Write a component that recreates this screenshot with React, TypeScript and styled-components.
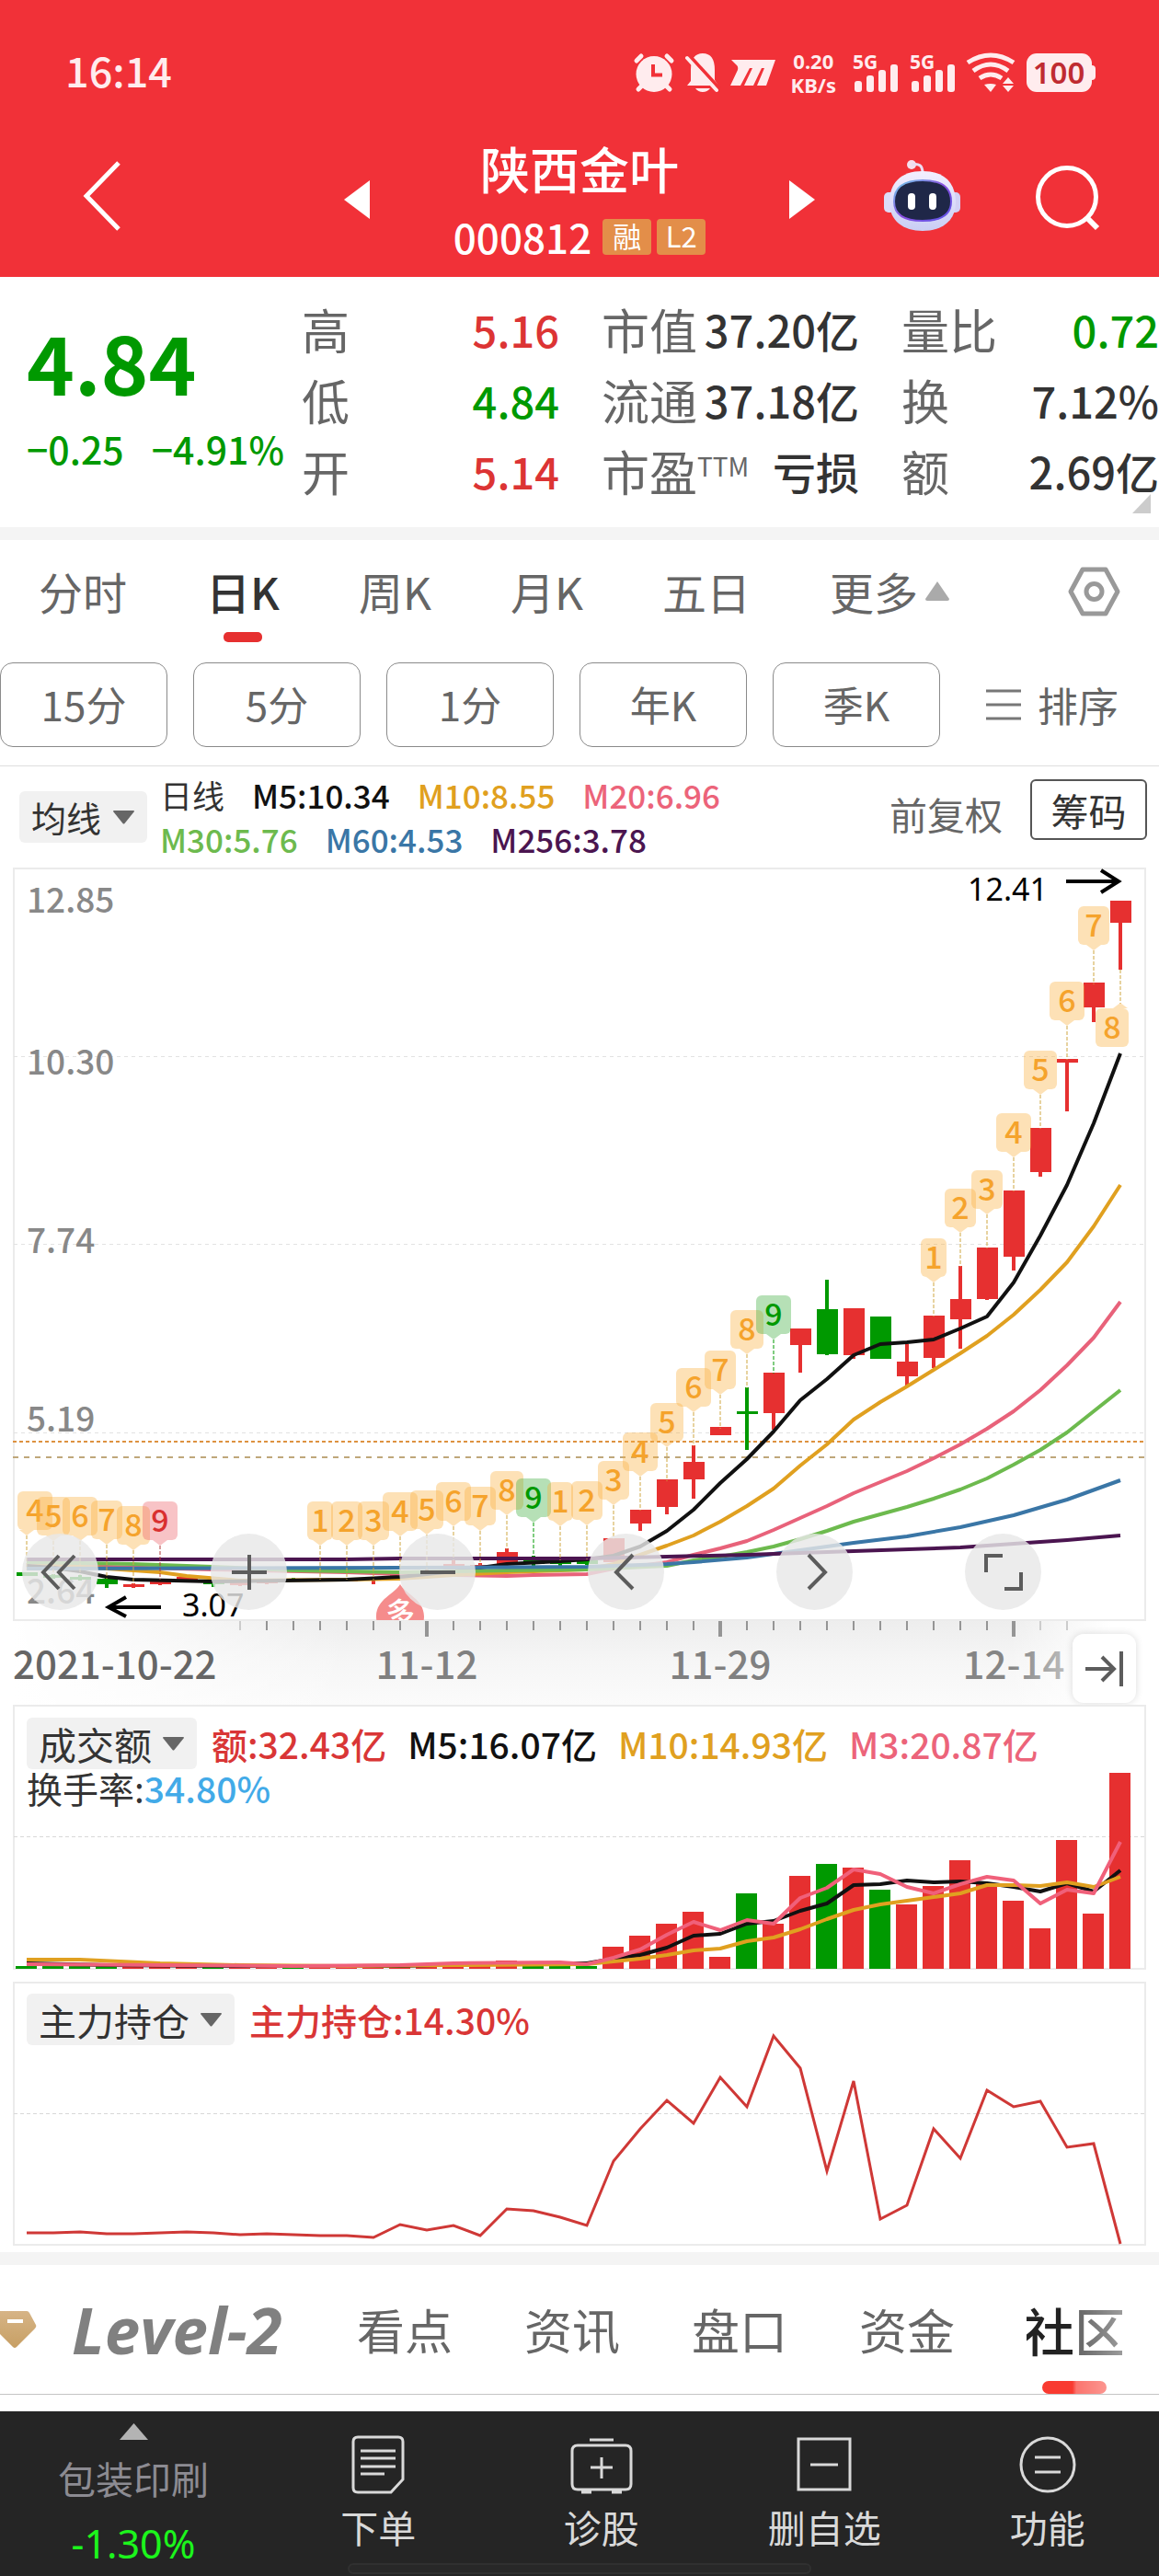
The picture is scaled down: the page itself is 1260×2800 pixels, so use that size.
import React from "react";
import styled, { createGlobalStyle } from "styled-components";

const SANS = `"Noto Sans CJK SC", "Noto Sans", sans-serif`;
const RED = "#e63030";
const GREEN = "#009900";

const GlobalStyle = createGlobalStyle`
  * { box-sizing: border-box; }
  body { margin: 0; background: #fff; font-family: ${SANS}; color: #333; }
  button, select { font: inherit; color: inherit; border: 0; margin: 0; padding: 0; background: none; cursor: pointer; }
  svg { display: block; flex: none; overflow: visible; }
  dl, dt, dd, h1, p { margin: 0; font-weight: inherit; }
`;

/* ---------- header ---------- */

const Header = styled.header`
  background: #f13138;
  color: #fff;
`;

const StatusBar = styled.div`
  display: flex;
  align-items: center;
  justify-content: space-between;
  height: 129px;
  padding: 28px 69px 0 71px;
`;

const Clock = styled.time`
  padding-bottom: 6px;
  font-size: 45px;
  line-height: 48px;
  font-weight: 500;
  color: #ffecee;
`;

const StatusIcons = styled.div`
  display: flex;
  align-items: center;
  gap: 12px;
  color: #ffecee;
`;

const NetSpeed = styled.div`
  font-family: "Noto Sans", sans-serif;
  font-size: 22px;
  line-height: 26px;
  font-weight: 700;
  text-align: center;
  margin: 0 6px 0 4px;
`;

const TitleBar = styled.div`
  display: grid;
  grid-template-columns: 1fr 512px 1fr;
  align-items: center;
  height: 172px;
  padding: 0 64px 0 90px;
`;

const TitleCenter = styled.div`
  display: flex;
  align-items: center;
  justify-content: space-between;
  margin: 0 -13px 0 -13px;
  padding: 4px 26px 0 0;
`;

const TitleActions = styled.div`
  display: flex;
  align-items: center;
  justify-content: flex-end;
  gap: 80px;
`;

const StockName = styled.h1`
  font-size: 54px;
  line-height: 60px;
  font-weight: 500;
  text-align: center;
`;

const StockCode = styled.div`
  display: flex;
  align-items: center;
  gap: 12px;
  margin-top: 20px;
  font-size: 44px;
  line-height: 48px;
  font-weight: 500;
`;

const Badges = styled.span`
  display: flex;
  gap: 6px;
`;

const Badge = styled.span`
  width: 53px;
  height: 39px;
  border-radius: 4px;
  background: #e38e49;
  font-size: 31px;
  line-height: 36px;
  font-weight: 400;
  text-align: center;
`;

/* ---------- quote ---------- */

const Quote = styled.section`
  position: relative;
  display: grid;
  grid-template-columns: 282px repeat(3, 1fr);
  column-gap: 46px;
  padding: 18px 0 23px;
`;

const PriceBlock = styled.div`
  padding: 28px 0 0 29px;
  color: ${GREEN};
  white-space: nowrap;
`;

const Price = styled.div`
  font-size: 88px;
  line-height: 90px;
  font-weight: 700;
`;

const Change = styled.div`
  display: flex;
  gap: 30px;
  margin-top: 26px;
  font-size: 41px;
  line-height: 48px;
  font-weight: 500;
`;

const Stats = styled.dl``;

const Stat = styled.div`
  display: flex;
  justify-content: space-between;
  line-height: 77px;
  white-space: nowrap;
`;

const StatLabel = styled.dt`
  font-size: 52px;
  color: #666;
`;

const Ttm = styled.sup`
  font-size: 28px;
  line-height: 28px;
  vertical-align: 16px;
`;

const StatValue = styled.dd<{ $color?: string }>`
  font-size: 47px;
  font-weight: 500;
  color: ${(p) => p.$color ?? "#333"};
`;

const Corner = styled.svg`
  position: absolute;
  right: 9px;
  bottom: 15px;
`;

const Band = styled.div`
  height: 14px;
  background: #f4f4f4;
`;

/* ---------- period tabs ---------- */

const Periods = styled.nav`
  display: flex;
  align-items: flex-start;
  gap: 86px;
  height: 133px;
  padding: 25px 42px 0;
`;

const Period = styled.button<{ $active?: boolean }>`
  display: flex;
  flex-direction: column;
  align-items: center;
  gap: 15px;
  font-size: 48px;
  line-height: 60px;
  white-space: nowrap;
  font-weight: ${(p) => (p.$active ? 500 : 400)};
  color: ${(p) => (p.$active ? "#333" : "#666")};

  &::after {
    content: "";
    width: 42px;
    height: 11px;
    border-radius: 5px;
    background: ${(p) => (p.$active ? RED : "transparent")};
  }
`;

const WithIcon = styled.span`
  display: flex;
  align-items: center;
  gap: 8px;
`;

const GearButton = styled.button`
  margin: 4px 0 0 auto;
`;

const Pills = styled.div`
  display: flex;
  gap: 28px;
  padding-bottom: 20px;
  border-bottom: 1px solid #dedede;
`;

const Pill = styled.button`
  flex: 1;
  height: 92px;
  padding-bottom: 2px;
  border: 1px solid #8a8a8a;
  border-radius: 14px;
  font-size: 44px;
  color: #666;
`;

const SortButton = styled.button`
  display: flex;
  align-items: center;
  gap: 18px;
  width: 210px;
  padding-left: 22px;
  font-size: 44px;
  color: #666;
  white-space: nowrap;
`;

/* ---------- indicator legends ---------- */

const MaBar = styled.div`
  display: flex;
  align-items: center;
  height: 110px;
  padding: 0 13px 0 21px;
`;

const Drop = styled.label`
  display: flex;
  align-items: center;
  height: 56px;
  padding: 0 14px 0 13px;
  gap: 12px;
  border-radius: 6px;
  background: #f1f1f1;
`;

const DropSelect = styled.select<{ $size: number }>`
  appearance: none;
  outline: 0;
  font-size: ${(p) => p.$size}px;
  line-height: 54px;
  color: #333;
`;

const MaLegend = styled.div`
  display: grid;
  margin-left: 14px;
`;

const LegendRow = styled.div<{ $gap: number; $size: number; $line?: number }>`
  display: flex;
  gap: ${(p) => p.$gap}px;
  font-size: ${(p) => p.$size}px;
  line-height: ${(p) => p.$line ?? 48}px;
  font-weight: 500;
  white-space: nowrap;
`;

const Ink = styled.span<{ $color: string; $weight?: number }>`
  color: ${(p) => p.$color};
  font-weight: ${(p) => p.$weight ?? 500};
`;

const AdjustButton = styled.button`
  margin: 0 0 8px auto;
  font-size: 41px;
  color: #666;
`;

const ChipButton = styled.button`
  width: 127px;
  height: 66px;
  margin: 0 0 16px 30px;
  border: 2px solid #555;
  border-radius: 6px;
  font-size: 41px;
  line-height: 56px;
`;

/* ---------- charts ---------- */

const ChartPanel = styled.section<{ $gap: number }>`
  position: relative;
  padding: 0 14px;
  margin-bottom: ${(p) => p.$gap}px;
`;

const Plot = styled.svg`
  width: 100%;
  height: auto;
  font-family: ${SANS};
`;

const PanelHead = styled.div`
  position: absolute;
  top: 14px;
  left: 29px;
  right: 29px;
`;

const PanelRow = styled.div`
  display: flex;
  align-items: center;
  gap: 16px;
`;

const ChartControls = styled.div`
  position: absolute;
  left: 24px;
  right: 128px;
  bottom: 103px;
  display: flex;
  justify-content: space-between;
`;

const RoundButton = styled.button`
  display: grid;
  place-items: center;
  width: 83px;
  height: 83px;
  border-radius: 50%;
  background: rgba(232, 232, 232, 0.82);
`;

const JumpButton = styled.button`
  position: absolute;
  right: 25px;
  bottom: 2px;
  display: grid;
  place-items: center;
  width: 69px;
  height: 75px;
  border-radius: 12px;
  background: #fff;
  box-shadow: 0 0 8px rgba(0, 0, 0, 0.14);
`;

/* ---------- info tabs and bottom bar ---------- */

const InfoTabs = styled.nav`
  display: flex;
  align-items: center;
  gap: 78px;
  height: 141px;
  border-bottom: 1px solid #c4c4c4;
  overflow: hidden;
`;

const LevelTab = styled.button`
  display: flex;
  align-items: center;
  gap: 38px;
  width: 310px;
  font-family: "Open Sans", sans-serif;
  font-size: 69px;
  line-height: 60px;
  font-weight: 700;
  font-style: italic;
  color: #808080;
  white-space: nowrap;
`;

const InfoTab = styled.button<{ $active?: boolean }>`
  display: flex;
  flex-direction: column;
  align-items: center;
  justify-content: flex-end;
  width: 104px;
  height: 140px;
  font-size: ${(p) => (p.$active ? 56 : 52)}px;
  font-weight: ${(p) => (p.$active ? 500 : 400)};
  line-height: 72px;
  white-space: nowrap;
  color: ${(p) => (p.$active ? "#222" : "#666")};
  mask-image: ${(p) => (p.$active ? "linear-gradient(to right, #000 48%, rgba(0,0,0,.7) 52%, rgba(0,0,0,.45) 100%)" : "none")};
  mask-clip: no-clip;

  &::after {
    content: "";
    width: 70px;
    height: 14px;
    margin-top: 20px;
    border-radius: 7px;
    background: ${(p) => (p.$active ? "#f93a30" : "transparent")};
  }
`;

const BottomBar = styled.footer`
  display: grid;
  grid-template-columns: 290px repeat(4, 1fr);
  position: relative;
  height: 179px;
  margin-top: 18px;
  background: #252525;
  color: #d9d9d9;
`;

const Sector = styled.button`
  display: flex;
  flex-direction: column;
  align-items: center;
  padding-top: 13px;
  font-size: 41px;
  line-height: 50px;
  color: #8c8b92;
`;

const SectorName = styled.span`
  margin-top: 16px;
`;

const SectorChange = styled.span`
  margin-top: 22px;
  font-family: "Noto Sans", sans-serif;
  font-size: 43px;
  color: #1cf51c;
`;

const Action = styled.button`
  display: flex;
  flex-direction: column;
  align-items: center;
  padding-top: 26px;
  gap: 10px;
  font-size: 41px;
  line-height: 50px;
`;

const HomeIndicator = styled.div`
  position: absolute;
  left: 30%;
  right: 30%;
  bottom: 2px;
  height: 12px;
  border-radius: 6px;
  border: 2px solid #303030;
  background: #282828;
`;

/* ---------- chart data ---------- */

const x = (i: number) => 29 + 29 * i;

const known = (pairs: number[][]) => pairs.map(([i, y]) => `${x(i)},${y}`).join(" ");
const dense = (ys: number[]) => ys.map((y, i) => `${x(i)},${y}`).join(" ");

// [index, up, high, bodyTop, bodyBottom, low]
const candles: [number, boolean, number, number, number, number][] = [
  [0, false, 1709, 1709, 1713, 1713], [1, false, 1711, 1712, 1715, 1716], [2, false, 1712, 1714, 1717, 1718],
  [3, false, 1715, 1716, 1722, 1726], [4, true, 1721, 1722, 1725, 1726], [5, true, 1718, 1719, 1722, 1723],
  [6, true, 1714, 1714, 1718, 1718], [7, false, 1716, 1717, 1722, 1725], [8, true, 1719, 1720, 1723, 1724],
  [9, true, 1718, 1719, 1721, 1722], [10, false, 1715, 1716, 1719, 1719], [11, true, 1716, 1717, 1719, 1719],
  [12, true, 1716, 1717, 1719, 1719], [13, true, 1714, 1716, 1718, 1722], [14, true, 1711, 1712, 1716, 1716],
  [15, true, 1706, 1708, 1712, 1712], [16, true, 1695, 1700, 1706, 1706], [17, true, 1699, 1701, 1704, 1704],
  [18, true, 1683, 1687, 1701, 1701], [19, false, 1691, 1696, 1700, 1702], [20, false, 1695, 1698, 1700, 1702],
  [21, false, 1692, 1696, 1700, 1701], [22, true, 1672, 1672, 1698, 1698], [23, true, 1641, 1641, 1656, 1664],
  [24, true, 1608, 1608, 1638, 1646], [25, true, 1571, 1589, 1608, 1629], [26, true, 1551, 1551, 1560, 1560],
  [27, false, 1508, 1534, 1537, 1576], [28, true, 1492, 1492, 1536, 1554], [29, true, 1444, 1444, 1462, 1492],
  [30, false, 1391, 1423, 1472, 1473], [31, true, 1422, 1422, 1473, 1477], [32, false, 1431, 1431, 1477, 1477],
  [33, true, 1461, 1480, 1496, 1506], [34, true, 1430, 1430, 1476, 1487], [35, true, 1376, 1412, 1434, 1466],
  [36, true, 1356, 1356, 1412, 1413], [37, true, 1294, 1294, 1366, 1381], [38, true, 1226, 1226, 1274, 1279],
  [39, true, 1151, 1151, 1155, 1208], [40, true, 1068, 1068, 1095, 1111], [41, true, 979, 979, 1003, 1054],
];

// [index, digit, tip y]
const flags: [number, number, number][] = [
  [0, 4, 1669], [1, 5, 1675], [2, 6, 1675], [3, 7, 1679], [4, 8, 1685], [5, 9, 1680],
  [11, 1, 1680], [12, 2, 1680], [13, 3, 1680], [14, 4, 1670], [15, 5, 1668], [16, 6, 1659], [17, 7, 1664],
  [18, 8, 1647], [19, 9, 1655], [20, 1, 1659], [21, 2, 1658], [22, 3, 1636], [23, 4, 1605], [24, 5, 1573],
  [25, 6, 1535], [26, 7, 1516], [27, 8, 1472], [28, 9, 1456], [34, 1, 1394], [35, 2, 1340], [36, 3, 1320],
  [37, 4, 1258], [38, 5, 1190], [39, 6, 1115], [40, 7, 1033],
];
const flagWidth = [0, 28, 34, 34, 38, 36, 38, 34, 36, 38];

const averages: [string, string][] = [
  ["#e8627a", known([[0, 1702], [3, 1703], [7, 1706], [12, 1709], [14, 1711], [18, 1713], [19, 1712], [21, 1711], [22, 1705], [23, 1702], [24, 1698], [25, 1690], [26, 1683], [27, 1675], [28, 1663], [29, 1650], [30, 1637], [31, 1623], [32, 1611], [33, 1599], [34, 1585], [35, 1570], [36, 1553], [37, 1534], [38, 1511], [39, 1484], [40, 1454], [41, 1415]])],
  ["#e0a020", known([[0, 1698], [3, 1705], [5, 1709], [6, 1713], [8, 1718], [12, 1717], [14, 1716], [16, 1712], [18, 1709], [20, 1707], [21, 1706], [22, 1700], [23, 1690], [24, 1680], [25, 1669], [26, 1654], [27, 1637], [28, 1618], [29, 1593], [30, 1570], [31, 1543], [32, 1524], [33, 1507], [34, 1489], [35, 1471], [36, 1452], [37, 1429], [38, 1402], [39, 1372], [40, 1333], [41, 1288]])],
  ["#111", known([[0, 1702], [1, 1704], [2, 1708], [3, 1714], [4, 1717], [7, 1719], [12, 1717], [14, 1714], [16, 1708], [18, 1700], [20, 1697], [21, 1695], [22, 1691], [23, 1681], [24, 1664], [25, 1641], [26, 1612], [27, 1586], [28, 1556], [29, 1522], [30, 1499], [31, 1473], [32, 1461], [33, 1459], [34, 1456], [35, 1444], [36, 1431], [37, 1394], [38, 1343], [39, 1288], [40, 1221], [41, 1145]])],
  ["#6dba4e", known([[0, 1698], [4, 1700], [7, 1703], [10, 1707], [14, 1709], [18, 1707], [21, 1706], [24, 1702], [25, 1696], [26, 1692], [27, 1687], [28, 1681], [29, 1673], [30, 1664], [31, 1654], [32, 1646], [33, 1638], [34, 1629], [35, 1619], [36, 1607], [37, 1592], [38, 1576], [39, 1557], [40, 1534], [41, 1511]])],
  ["#3a76a6", known([[0, 1705], [14, 1704], [21, 1703], [24, 1700], [25, 1698], [27, 1693], [29, 1685], [31, 1677], [33, 1670], [35, 1660], [37, 1647], [39, 1630], [41, 1609]])],
  ["#4b1550", known([[0, 1695], [12, 1695], [14, 1694], [21, 1694], [24, 1692], [27, 1690], [31, 1686], [35, 1682], [37, 1678], [39, 1674], [41, 1669]])],
];

const volumeTops = [2137, 2137, 2137, 2137, 2137, 2137, 2137, 2137, 2137, 2137, 2137, 2137, 2137, 2137, 2137, 2136, 2135, 2135, 2131, 2136, 2136, 2137, 2116, 2104, 2091, 2078, 2127, 2058, 2091, 2039, 2026, 2030, 2054, 2070, 2050, 2022, 2047, 2066, 2096, 2000, 2080, 1927];
const volumeDown = new Set([0, 1, 2, 3, 7, 10, 19, 20, 21, 27, 30, 32]);

const volumeAverages: [string, string][] = [
  ["#111", known([[0, 2134], [3, 2136], [8, 2137], [14, 2137], [18, 2134], [21, 2134], [22, 2129], [23, 2125], [24, 2117], [25, 2104], [26, 2102], [27, 2091], [28, 2088], [29, 2077], [30, 2069], [31, 2049], [32, 2048], [33, 2044], [34, 2046], [35, 2045], [36, 2047], [37, 2051], [38, 2056], [39, 2047], [40, 2056], [41, 2033]])],
  ["#e0a020", known([[0, 2130], [2, 2130], [5, 2134], [8, 2136], [12, 2137], [16, 2136], [21, 2135], [22, 2132], [23, 2129], [24, 2125], [25, 2120], [26, 2118], [27, 2110], [28, 2106], [29, 2097], [30, 2086], [31, 2076], [32, 2070], [33, 2066], [34, 2062], [35, 2058], [36, 2049], [37, 2049], [38, 2050], [39, 2046], [40, 2051], [41, 2040]])],
  ["#f0607a", known([[0, 2135], [10, 2137], [14, 2136], [16, 2134], [20, 2133], [21, 2135], [22, 2128], [23, 2119], [24, 2103], [25, 2089], [26, 2098], [27, 2087], [28, 2091], [29, 2063], [30, 2052], [31, 2032], [32, 2037], [33, 2051], [34, 2058], [35, 2048], [36, 2040], [37, 2044], [38, 2069], [39, 2054], [40, 2058], [41, 2002]])],
];

const holding = dense([2427, 2427, 2426, 2428, 2428, 2427, 2426, 2427, 2429, 2428, 2429, 2430, 2430, 2432, 2418, 2424, 2419, 2430, 2401, 2403, 2410, 2419, 2349, 2314, 2283, 2308, 2258, 2290, 2213, 2248, 2360, 2262, 2412, 2397, 2314, 2346, 2272, 2290, 2284, 2334, 2330, 2439]);

/* ---------- drawings ---------- */

const Caret = () => (
  <svg width="23" height="15" viewBox="0 0 23 15"><path d="M0 1Q0 0 1 0H22Q23 0 23 1L12.500 14Q11.500 15 10.500 14Z" fill="#666" /></svg>
);

const Signal = () => (
  <svg width="50" height="42" viewBox="0 0 50 42">
    <text x="0" y="17" fontFamily="Noto Sans" fontSize="21" fontWeight="700" fill="currentColor">5G</text>
    {[0, 1, 2, 3].map((n) => (
      <rect key={n} x={2 + n * 13} y={30 - n * 6} width="8" height={12 + n * 6} rx="3" fill="currentColor" />
    ))}
  </svg>
);

const AlarmIcon = () => (
  <svg width="44" height="42" viewBox="0 0 44 42">
    <g stroke="currentColor" strokeWidth="5" strokeLinecap="round">
      <path d="M3 8L8 3M36 3L41 8M10 34L5 39M34 34L39 39" />
    </g>
    <circle cx="22" cy="22.500" r="19.500" fill="currentColor" />
    <path d="M21 12V23.500H31" fill="none" stroke="#f13138" strokeWidth="4" />
  </svg>
);

const MuteIcon = () => (
  <svg width="37" height="42" viewBox="0 0 37 42">
    <path d="M2 35L6 30V18Q6 0 19 0Q32 0 32 18V29L36 35ZM11 38H27Q24 42 19 42Q14 42 11 38Z" fill="currentColor" />
    <path d="M4 2L37 38" stroke="#f13138" strokeWidth="4" />
    <path d="M2 5L34 40" stroke="currentColor" strokeWidth="4" strokeLinecap="round" />
  </svg>
);

const BrandIcon = () => (
  <svg width="50" height="28" viewBox="0 0 50 28">
    <path d="M1 0H49L39 28H29L37 9H34L25 28H15L24 9H21L11 28H0L8 11Q9 7 6 5Z" fill="currentColor" />
  </svg>
);

const WifiIcon = () => (
  <svg width="53" height="42" viewBox="0 0 53 42">
    <g fill="none" stroke="currentColor" strokeWidth="5">
      <path d="M1 10Q26 -6 51 10M7 19Q26 5 45 19M14 27Q26 19 38 27" />
    </g>
    <path d="M19 34Q26 32 32 34L26 42ZM39 33L45 26L51 33ZM39 35H51L45 42Z" fill="currentColor" />
  </svg>
);

const BatteryIcon = () => (
  <svg width="75" height="42" viewBox="0 0 75 42">
    <rect width="71" height="42" rx="11" fill="currentColor" />
    <path d="M71 13Q75 13 75 17V25Q75 29 71 29Z" fill="currentColor" />
    <text x="35" y="33" textAnchor="middle" fontFamily="Noto Sans" fontSize="33" fontWeight="600" fill="#bf2b31">100</text>
  </svg>
);

const RobotIcon = () => (
  <svg width="86" height="82" viewBox="0 0 86 82">
    <defs>
      <linearGradient id="shell" x1="0" y1="0" x2="0" y2="1">
        <stop offset="0" stopColor="#f3efff" /><stop offset="1" stopColor="#c9cdf4" />
      </linearGradient>
      <linearGradient id="rim" x1="0" y1="0" x2="1" y2="1">
        <stop offset="0" stopColor="#6fd0ea" /><stop offset="0.500" stopColor="#8a4ee0" /><stop offset="1" stopColor="#5a55e6" />
      </linearGradient>
    </defs>
    <circle cx="31" cy="5" r="5" fill="#f5dfee" />
    <path d="M31 5Q43 2 43 14" fill="none" stroke="#ecdcf2" strokeWidth="3" />
    <rect x="1" y="35" width="12" height="22" rx="5" fill="#dcdcf8" />
    <rect x="72" y="35" width="12" height="22" rx="5" fill="#d3d0f5" />
    <path d="M43 12C67 12 79 25 79 46C79 66 64 77 43 77C22 77 7 66 7 46C7 25 19 12 43 12Z" fill="url(#shell)" />
    <path d="M43 22C64 22 74 30 74 45C74 59 64 66 43 66C22 66 12 59 12 45C12 30 22 22 43 22Z" fill="#1f2748" stroke="url(#rim)" strokeWidth="2" />
    <rect x="27" y="36" width="8" height="18" rx="4" fill="#fff" />
    <rect x="50" y="36" width="8" height="18" rx="4" fill="#fff" />
  </svg>
);

const Flag = ({ i, digit, tip }: { i: number; digit: number; tip: number }) => {
  const w = flagWidth[digit];
  const early = i === 5;
  const fill = digit === 9 ? (early ? "#ec6268" : "#3fae3f") : "#fbb040";
  const ink = digit === 9 ? (early ? "#d93030" : GREEN) : "#f5a32c";
  const cx = i === 0 ? 38 : x(i);
  return (
    <g>
      <path d={`M${x(i)} ${tip}V${tip + 37}`} stroke={digit === 9 ? (early ? "#b03a3a" : GREEN) : "#cfa640"} strokeWidth="1" strokeDasharray="4 2" />
      <rect x={cx - w / 2} y={tip - 48} width={w} height="42" rx="6" fill={fill} fillOpacity="0.380" />
      <path d={`M${x(i) - 8} ${tip - 6}H${x(i) + 8}L${x(i)} ${tip}Z`} fill={fill} fillOpacity="0.380" />
      <text x={cx} y={tip - 15} textAnchor="middle" fontSize="34" fontWeight="500" fill={ink}>{digit}</text>
    </g>
  );
};

const PriceChart = () => (
  <Plot viewBox="14 943 1232 910" role="img" aria-label="日K">
    <defs>
      <linearGradient id="axisShade" x1="0" y1="0" x2="0" y2="1">
        <stop offset="0" stopColor="#ededed" /><stop offset="0.500" stopColor="#f6f6f6" /><stop offset="1" stopColor="#fbfbfb" />
      </linearGradient>
      <linearGradient id="axisFade" x1="0" y1="0" x2="1" y2="0">
        <stop offset="0" stopColor="#fff" /><stop offset="0.300" stopColor="#fff" stopOpacity="0" />
        <stop offset="0.880" stopColor="#fff" stopOpacity="0" /><stop offset="0.970" stopColor="#fff" />
      </linearGradient>
      <linearGradient id="dateFade" gradientUnits="userSpaceOnUse" x1="1100" y1="0" x2="1175" y2="0">
        <stop offset="0" stopColor="#858585" /><stop offset="1" stopColor="#ccc" />
      </linearGradient>
      <clipPath id="plotClip"><rect x="15" y="945" width="1230" height="816" /></clipPath>
    </defs>
    <rect x="15" y="1761" width="1230" height="92" fill="url(#axisShade)" />
    <rect x="15" y="1761" width="1230" height="92" fill="url(#axisFade)" />
    <rect x="15" y="944" width="1230" height="817" fill="#fff" stroke="#ebebeb" strokeWidth="2" />
    <g stroke="#e2e2e2" strokeWidth="1" strokeDasharray="4 4">
      <path d="M15 1148.500H1245M15 1352.500H1245M15 1557.500H1245" />
    </g>
    <path d="M14 1567H1245" stroke="#dd9240" strokeWidth="2" strokeDasharray="4 3" />
    <path d="M14 1584H1245" stroke="#bfa77a" strokeWidth="2" strokeDasharray="6 6" />
    <g fontSize="37" fontWeight="500" fill="#888">
      <text x="29" y="992">12.85</text><text x="29" y="1168">10.30</text><text x="29" y="1362">7.74</text>
      <text x="29" y="1556">5.19</text><text x="29" y="1743">2.64</text>
    </g>
    {candles.map(([i, up, high, top, bottom, low]) => (
      <g key={i} fill={up ? RED : GREEN}>
        <rect x={x(i) - 2} y={high} width="4" height={Math.max(low - high, 1)} />
        <rect x={x(i) - 11} y={top} width="23" height={bottom - top} />
      </g>
    ))}
    {averages.map(([color, points]) => (
      <polyline key={color} points={points} fill="none" stroke={color} strokeWidth="4" strokeLinejoin="round" />
    ))}
    {flags.map(([i, digit, tip]) => <Flag key={i} i={i} digit={digit} tip={tip} />)}
    <path d="M1218 1054V1091" stroke="#cfa640" strokeDasharray="4 2" />
    <rect x="1191" y="1096" width="36" height="42" rx="6" fill="#fbb040" fillOpacity="0.380" />
    <path d="M1210 1096H1226L1218 1090Z" fill="#fbb040" fillOpacity="0.380" />
    <text x="1209" y="1129" textAnchor="middle" fontSize="34" fontWeight="500" fill="#f5a32c">8</text>
    <g fontFamily="Noto Sans" fontSize="34" fill="#000">
      <text x="1052" y="979">12.41</text><text x="198" y="1757">3.07</text>
    </g>
    <path d="M1159 958H1216M1197 946L1216 958L1197 970M175 1747H118M137 1736L118 1747L137 1757" fill="none" stroke="#000" strokeWidth="4" />
    <g clipPath="url(#plotClip)">
      <path d="M435 1722C440 1732 461 1738 461 1757A26 26 0 1 1 409 1757C409 1738 430 1732 435 1722Z" fill="#f58c8c" />
      <text x="435" y="1765" textAnchor="middle" fontSize="32" fontWeight="500" fill="#fff">多</text>
    </g>
    {Array.from({ length: 32 }, (_, n) => n + 8).map((i) => {
      const major = i === 15 || i === 26 || i === 37;
      return <rect key={i} x={x(i) - (major ? 2 : 1)} y="1762" width={major ? 4 : 2} height={major ? 17 : 10} fill={i < 9 || i > 37 ? "#ccc" : "#959595"} />;
    })}
    <g fontSize="42" fontWeight="500" fill="#808080">
      <text x="14" y="1825" fill="#666">2021-10-22</text>
      <text x="464" y="1825" textAnchor="middle">11-12</text>
      <text x="783" y="1825" textAnchor="middle">11-29</text>
      <text x="1102" y="1825" textAnchor="middle" fill="url(#dateFade)">12-14</text>
    </g>
  </Plot>
);

const VolumeChart = () => (
  <Plot viewBox="14 1853 1232 289" role="img" aria-label="成交额">
    <rect x="15" y="1854" width="1230" height="286" fill="#fff" stroke="#ebebeb" strokeWidth="2" />
    <path d="M15 1996.500H1245" stroke="#d8d8d8" strokeDasharray="4 3" />
    {volumeTops.map((top, i) => (
      <rect key={i} x={x(i) - 12} y={top} width="23" height={2140 - top} fill={volumeDown.has(i) ? GREEN : RED} />
    ))}
    {volumeAverages.map(([color, points]) => (
      <polyline key={color} points={points} fill="none" stroke={color} strokeWidth="4" strokeLinejoin="round" />
    ))}
  </Plot>
);

const HoldingChart = () => (
  <Plot viewBox="14 2153 1232 289" role="img" aria-label="主力持仓">
    <rect x="15" y="2155" width="1230" height="285" fill="#fff" stroke="#ebebeb" strokeWidth="2" />
    <path d="M15 2297.500H1245" stroke="#d8d8d8" strokeDasharray="4 3" />
    <polyline points={holding} fill="none" stroke="#cf3836" strokeWidth="3" />
  </Plot>
);

const controls: [string, string][] = [
  ["最早", "M18 2L1 20L18 38M35 2L18 20L35 38"],
  ["放大", "M20 1V39M1 20H39"],
  ["缩小", "M1 20H39"],
  ["向左", "M27 1L9 20L27 38"],
  ["向右", "M13 1L31 20L13 38"],
  ["全屏", "M1 20V2H19M39 20V38H21"],
];

/* ---------- content ---------- */

const stats: { label: string; ttm?: boolean; value: string; color?: string }[][] = [
  [
    { label: "高", value: "5.16", color: "#dc3434" },
    { label: "低", value: "4.84", color: GREEN },
    { label: "开", value: "5.14", color: "#dc3434" },
  ],
  [
    { label: "市值", value: "37.20亿" },
    { label: "流通", value: "37.18亿" },
    { label: "市盈", ttm: true, value: "亏损" },
  ],
  [
    { label: "量比", value: "0.72", color: GREEN },
    { label: "换", value: "7.12%" },
    { label: "额", value: "2.69亿" },
  ],
];

export default function App() {
  return (
    <>
      <GlobalStyle />
      <Header>
        <StatusBar>
          <Clock>16:14</Clock>
          <StatusIcons>
            <AlarmIcon /><MuteIcon /><BrandIcon />
            <NetSpeed>0.20<br />KB/s</NetSpeed>
            <Signal /><Signal /><WifiIcon /><BatteryIcon />
          </StatusIcons>
        </StatusBar>
        <TitleBar>
          <div>
            <button aria-label="返回">
              <svg width="42" height="76" viewBox="0 0 42 76"><path d="M39 2L4 38L39 74" fill="none" stroke="#fff" strokeWidth="5" /></svg>
            </button>
          </div>
          <TitleCenter>
            <button aria-label="上一只"><svg width="28" height="42" viewBox="0 0 28 42"><path d="M28 0V42L0 21Z" fill="#fff" /></svg></button>
            <div>
              <StockName>陕西金叶</StockName>
              <StockCode>000812<Badges><Badge>融</Badge><Badge>L2</Badge></Badges></StockCode>
            </div>
            <button aria-label="下一只"><svg width="28" height="42" viewBox="0 0 28 42"><path d="M0 0V42L28 21Z" fill="#fff" /></svg></button>
          </TitleCenter>
          <TitleActions>
            <button aria-label="智能助手"><RobotIcon /></button>
            <button aria-label="搜索">
              <svg width="70" height="70" viewBox="0 0 70 70"><circle cx="34" cy="34" r="31.500" fill="none" stroke="#fff" strokeWidth="5" /><path d="M55 56L67 68" stroke="#fff" strokeWidth="6" /></svg>
            </button>
          </TitleActions>
        </TitleBar>
      </Header>

      <Quote>
        <PriceBlock>
          <Price>4.84</Price>
          <Change><span>−0.25</span><span>−4.91%</span></Change>
        </PriceBlock>
        {stats.map((column, c) => (
          <Stats key={c}>
            {column.map((s) => (
              <Stat key={s.label}>
                <StatLabel>{s.label}{s.ttm && <Ttm>TTM</Ttm>}</StatLabel>
                <StatValue $color={s.color}>{s.value}</StatValue>
              </Stat>
            ))}
          </Stats>
        ))}
        <Corner width="20" height="21" viewBox="0 0 20 21"><path d="M20 0V21H0Z" fill="#ccc" /></Corner>
      </Quote>
      <Band />

      <Periods>
        <Period>分时</Period>
        <Period $active>日K</Period>
        <Period>周K</Period>
        <Period>月K</Period>
        <Period>五日</Period>
        <Period>
          <WithIcon>更多<svg width="26" height="21" viewBox="0 0 26 21"><path d="M13 0L26 19Q26 21 24 21H2Q0 21 0 19Z" fill="#aaa" /></svg></WithIcon>
        </Period>
        <GearButton aria-label="设置">
          <svg width="57" height="54" viewBox="0 0 57 54">
            <g fill="none" stroke="#999" strokeWidth="5" strokeLinejoin="round"><path d="M16 3H41L54 27L41 51H16L3 27Z" /><circle cx="28.500" cy="27" r="8.500" /></g>
          </svg>
        </GearButton>
      </Periods>
      <Pills>
        {["15分", "5分", "1分", "年K", "季K"].map((p) => <Pill key={p}>{p}</Pill>)}
        <SortButton>
          <svg width="38" height="34" viewBox="0 0 38 34"><path d="M0 2H38M0 17H38M0 32H38" stroke="#777" strokeWidth="3" /></svg>
          排序
        </SortButton>
      </Pills>

      <MaBar>
        <Drop>
          <DropSelect $size={38} aria-label="主图指标"><option>均线</option></DropSelect>
          <Caret />
        </Drop>
        <MaLegend>
          <LegendRow $gap={30} $size={35}>
            <Ink $color="#333" $weight={400}>日线</Ink>
            <Ink $color="#111">M5:10.34</Ink>
            <Ink $color="#e0a020">M10:8.55</Ink>
            <Ink $color="#ec647a">M20:6.96</Ink>
          </LegendRow>
          <LegendRow $gap={30} $size={35}>
            <Ink $color="#6dba4e">M30:5.76</Ink>
            <Ink $color="#3a76a6">M60:4.53</Ink>
            <Ink $color="#4b1550">M256:3.78</Ink>
          </LegendRow>
        </MaLegend>
        <AdjustButton>前复权</AdjustButton>
        <ChipButton>筹码</ChipButton>
      </MaBar>

      <ChartPanel $gap={0}>
        <PriceChart />
        <ChartControls>
          {controls.map(([label, d]) => (
            <RoundButton key={label} aria-label={label}>
              <svg width="40" height="40" viewBox="0 0 40 40"><path d={d} fill="none" stroke="#5c5c5c" strokeWidth="4" /></svg>
            </RoundButton>
          ))}
        </ChartControls>
        <JumpButton aria-label="最新">
          <svg width="42" height="38" viewBox="0 0 42 38"><path d="M0 19H30M18 6L31 19L18 32M39 0V38" fill="none" stroke="#5c5c5c" strokeWidth="4" /></svg>
        </JumpButton>
      </ChartPanel>

      <ChartPanel $gap={11}>
        <VolumeChart />
        <PanelHead>
          <PanelRow>
            <Drop>
              <DropSelect $size={41} aria-label="副图指标一"><option>成交额</option></DropSelect>
              <Caret />
            </Drop>
            <LegendRow $gap={23} $size={39}>
              <Ink $color="#d93636">额:32.43亿</Ink>
              <Ink $color="#111">M5:16.07亿</Ink>
              <Ink $color="#e0a020">M10:14.93亿</Ink>
              <Ink $color="#ec647a">M3:20.87亿</Ink>
            </LegendRow>
          </PanelRow>
          <LegendRow $gap={0} $size={39} $line={40}>
            <Ink $color="#333" $weight={400}>换手率:</Ink>
            <Ink $color="#42aae8">34.80%</Ink>
          </LegendRow>
        </PanelHead>
      </ChartPanel>

      <ChartPanel $gap={6}>
        <HoldingChart />
        <PanelHead>
          <PanelRow>
            <Drop>
              <DropSelect $size={41} aria-label="副图指标二"><option>主力持仓</option></DropSelect>
              <Caret />
            </Drop>
            <LegendRow $gap={0} $size={39}>
              <Ink $color="#d93636">主力持仓:14.30%</Ink>
            </LegendRow>
          </PanelRow>
        </PanelHead>
      </ChartPanel>
      <Band />

      <InfoTabs>
        <LevelTab>
          <svg width="40" height="42" viewBox="0 0 40 42">
            <defs><linearGradient id="gem" x1="0" y1="0" x2="0" y2="1"><stop offset="0" stopColor="#d6b486" /><stop offset="1" stopColor="#c79f64" /></linearGradient></defs>
            <path d="M0 1H29Q31 1 32 3L39 16Q40 18 38 20L18 40Q16 42 14 40L0 26Z" fill="url(#gem)" /><path d="M8 12H25" stroke="#fff" strokeWidth="4" />
          </svg>
          Level-2
        </LevelTab>
        <InfoTab>看点</InfoTab>
        <InfoTab>资讯</InfoTab>
        <InfoTab>盘口</InfoTab>
        <InfoTab>资金</InfoTab>
        <InfoTab $active>社区</InfoTab>
      </InfoTabs>

      <BottomBar>
        <Sector>
          <svg width="31" height="18" viewBox="0 0 31 18"><path d="M15.500 0L31 18H0Z" fill="#b3b3b3" /></svg>
          <SectorName>包装印刷</SectorName>
          <SectorChange>-1.30%</SectorChange>
        </Sector>
        <Action>
          <svg width="62" height="64" viewBox="0 0 62 64" fill="none" stroke="#d9d9d9" strokeWidth="3">
            <path d="M9 2H53Q58 2 58 7V48L45 62H9Q4 62 4 57V7Q4 2 9 2Z" /><path d="M12 17H50M12 25H50M12 34H50M12 42H38" />
          </svg>
          下单
        </Action>
        <Action>
          <svg width="68" height="64" viewBox="0 0 68 64" fill="none" stroke="#d9d9d9" strokeWidth="3">
            <path d="M21 5H47M8 11H60Q66 11 66 17V53Q66 59 60 59H8Q2 59 2 53V17Q2 11 8 11ZM34 24V47M22 35H46M12 62H23M45 62H56" />
          </svg>
          诊股
        </Action>
        <Action>
          <svg width="60" height="64" viewBox="0 0 60 64" fill="none" stroke="#d9d9d9" strokeWidth="3">
            <rect x="2" y="4" width="56" height="55" /><path d="M15 32H45" />
          </svg>
          删自选
        </Action>
        <Action>
          <svg width="62" height="64" viewBox="0 0 62 64" fill="none" stroke="#d9d9d9" strokeWidth="3">
            <circle cx="31" cy="32" r="29" /><path d="M17 24H45M17 40H45" />
          </svg>
          功能
        </Action>
        <HomeIndicator />
      </BottomBar>
    </>
  );
}
